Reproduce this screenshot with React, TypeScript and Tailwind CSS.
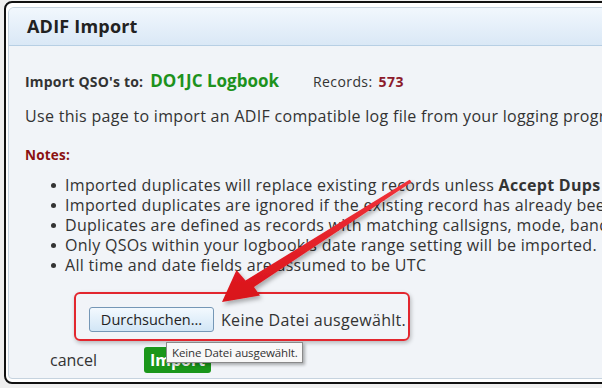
export default function App() {
  const notes = [
    <>
      Imported duplicates will replace existing records unless <b>Accept Dups</b> is checked
    </>,
    <>Imported duplicates are ignored if the existing record has already been confirmed</>,
    <>Duplicates are defined as records with matching callsigns, mode, band and time</>,
    <>Only QSOs within your logbook's date range setting will be imported.</>,
    <>All time and date fields are assumed to be UTC</>,
  ];

  return (
    <div className="relative h-[388px] w-[602px] overflow-hidden bg-[#efefef] font-['Open_Sans',sans-serif] text-[#333]">
      {/* screenshot frame */}
      <div className="ml-[4px] mt-[1px] h-[383px] w-[660px] rounded-l-[8px] border-2 border-[#111] bg-white pb-[3px] pl-[2px] pt-[4px]">
        <div className="flex h-full flex-col overflow-hidden rounded-tl-[6px] rounded-bl-[4px] border border-[#c6d3df] bg-[#f1f4f8]">
          <div className="flex h-[38px] shrink-0 items-center border-b border-[#b7cfe4] bg-gradient-to-b from-[#f1f7fd] to-[#dae8f6] pl-[18px]">
            <h1 className="text-[18px] font-bold text-[#222] tracking-[0.2px]">ADIF Import</h1>
          </div>

          <div className="pl-[16px] pt-[25px]">
            <div className="flex h-[20px] items-center whitespace-nowrap">
              <span className="text-[14px] font-bold tracking-[0.2px] text-[#333]">Import QSO's to:</span>
              <span className="ml-[7px] text-[17px] font-bold text-[#1d921d]">DO1JC Logbook</span>
              <span className="ml-[34px] text-[14px] tracking-[0.4px] text-[#333]">Records:</span>
              <span className="ml-[6px] text-[14px] font-bold tracking-[0.5px] text-[#8c1a2b]">573</span>
            </div>

            <p className="mt-[15px] h-[20px] whitespace-nowrap text-[16px] leading-[20px] tracking-[0.3px]">
              Use this page to import an ADIF compatible log file from your logging program or another logbook.
            </p>

            <p className="mt-[19px] h-[20px] text-[13.5px] font-bold leading-[20px] tracking-[0.2px] text-[#8b1111]">Notes:</p>

            <ul className="mt-[10px]">
              {notes.map((n, i) => (
                <li key={i} className="flex h-[20px] items-center whitespace-nowrap text-[16px] tracking-[0.3px]">
                  <span className="ml-[26px] mr-[9px] h-[5px] w-[5px] shrink-0 rounded-full bg-[#333]" />
                  <span>{n}</span>
                </li>
              ))}
            </ul>

            <div className="ml-[49px] mt-[17px] flex h-[49px] w-[336px] items-start rounded-[6px] border-2 border-[#e2262e] pl-[13px] pt-[13px] shadow-[1px_2px_4px_rgba(0,0,0,0.25)]">
              <button className="h-[25px] w-[125px] rounded-[3px] border border-[#7597b6] bg-gradient-to-b from-[#f3f9fe] to-[#d2e6f6] text-[14.5px] text-[#222]">
                Durchsuchen...
              </button>
              <span className="ml-[7px] mt-[1px] whitespace-nowrap text-[16px] tracking-[0.3px]">Keine Datei ausgewählt.</span>
            </div>

            <div className="mt-[6px] flex items-center">
              <span className="ml-[25px] w-[94px] text-[16px]">cancel</span>
              <button className="h-[26px] w-[67px] rounded-[3px] bg-[#1a961a] text-[16px] font-bold text-white">Import</button>
            </div>
          </div>
        </div>
      </div>

      {/* tooltip */}
      <div className="absolute left-[166px] top-[342px] flex h-[21px] w-[137px] items-center whitespace-nowrap border border-[#8a8a8a] bg-[#f8f8f8] pl-[5px] text-[11.5px] tracking-[-0.1px] text-[#333] shadow-[2px_2px_3px_rgba(0,0,0,0.3)]">
        Keine Datei ausgewählt.
      </div>

      {/* annotation arrow */}
      <svg className="pointer-events-none absolute left-0 top-0" width="602" height="388" viewBox="0 0 602 388">
        <defs>
          <filter id="sh" x="-20%" y="-20%" width="140%" height="140%">
            <feDropShadow dx="2" dy="3" stdDeviation="2" floodColor="#000" floodOpacity="0.3" />
          </filter>
          <linearGradient id="rg" x1="0" y1="0" x2="0" y2="1">
            <stop offset="0" stopColor="#f0333a" />
            <stop offset="1" stopColor="#d9121a" />
          </linearGradient>
        </defs>
        <g filter="url(#sh)">
          <polygon
            points="410.5,180.5 411.5,182.2 254,287 260,295.5 222,302 236.5,270 245.5,280.5 409.5,179.8"
            fill="url(#rg)"
          />
        </g>
      </svg>
    </div>
  );
}
